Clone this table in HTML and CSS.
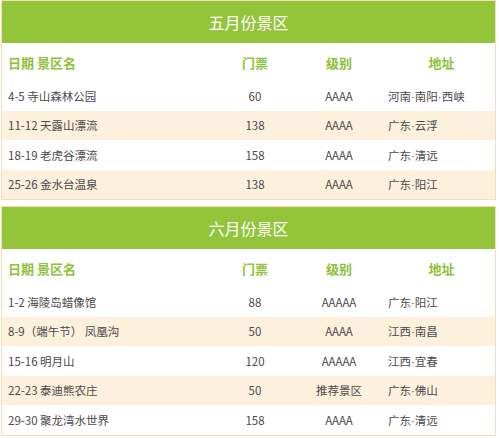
FILE: index.html
```html
<!DOCTYPE html>
<html lang="zh">
<head>
<meta charset="utf-8">
<link rel="stylesheet" href="styles.css">
</head>
<body>
<div class="page">
  <section class="card">
    <div class="title">五月份景区</div>
    <div class="row head"><div class="c1">日期 景区名</div><div class="c2">门票</div><div class="c3">级别</div><div class="c4">地址</div></div>
    <div class="row"><div class="c1">4-5 寺山森林公园</div><div class="c2">60</div><div class="c3">AAAA</div><div class="c4">河南<span class="dot">·</span>南阳<span class="dot">·</span>西峡</div></div>
    <div class="row alt"><div class="c1">11-12 天露山漂流</div><div class="c2">138</div><div class="c3">AAAA</div><div class="c4">广东<span class="dot">·</span>云浮</div></div>
    <div class="row"><div class="c1">18-19 老虎谷漂流</div><div class="c2">158</div><div class="c3">AAAA</div><div class="c4">广东<span class="dot">·</span>清远</div></div>
    <div class="row alt"><div class="c1">25-26 金水台温泉</div><div class="c2">138</div><div class="c3">AAAA</div><div class="c4">广东<span class="dot">·</span>阳江</div></div>
  </section>
  <section class="card">
    <div class="title">六月份景区</div>
    <div class="row head"><div class="c1">日期 景区名</div><div class="c2">门票</div><div class="c3">级别</div><div class="c4">地址</div></div>
    <div class="row"><div class="c1">1-2 海陵岛蜡像馆</div><div class="c2">88</div><div class="c3">AAAAA</div><div class="c4">广东<span class="dot">·</span>阳江</div></div>
    <div class="row alt"><div class="c1">8-9（端午节） 凤凰沟</div><div class="c2">50</div><div class="c3">AAAA</div><div class="c4">江西<span class="dot">·</span>南昌</div></div>
    <div class="row"><div class="c1">15-16 明月山</div><div class="c2">120</div><div class="c3">AAAAA</div><div class="c4">江西<span class="dot">·</span>宜春</div></div>
    <div class="row alt"><div class="c1">22-23 泰迪熊农庄</div><div class="c2">50</div><div class="c3">推荐景区</div><div class="c4">广东<span class="dot">·</span>佛山</div></div>
    <div class="row"><div class="c1">29-30 聚龙湾水世界</div><div class="c2">158</div><div class="c3">AAAA</div><div class="c4">广东<span class="dot">·</span>清远</div></div>
  </section>
</div>
</body>
</html>
```
FILE: styles.css
```css
html, body {
  margin: 0;
  padding: 0;
  background: #ffffff;
}
body {
  font-family: "Noto Sans CJK SC", "Noto Sans", sans-serif;
  color: #4a4a4a;
}
.page {
  display: flex;
  flex-direction: column;
  gap: 6px;
  padding: 0 3px 0 1px;
}
.card {
  border: 1px solid #f3dfb6;
}
.title {
  height: 42px;
  background: #93c43a;
  color: #ffffff;
  font-size: 16px;
  display: flex;
  align-items: center;
  justify-content: center;
}
.row {
  display: grid;
  grid-template-columns: 218px 70px 98px 1fr;
  height: 29.5px;
  align-items: center;
  font-size: 11.5px;
}
.row.alt {
  background: #fdf0dc;
}
.row.head {
  height: 38px;
  font-size: 13px;
  font-weight: bold;
  color: #8dc13b;
}
.c1 {
  padding-left: 6px;
}
.c2, .c3 {
  text-align: center;
}
.c4 {
  text-align: left;
}
.head .c4 {
  text-align: center;
}
.dot {
  font-family: "Liberation Sans", sans-serif;
}
```
